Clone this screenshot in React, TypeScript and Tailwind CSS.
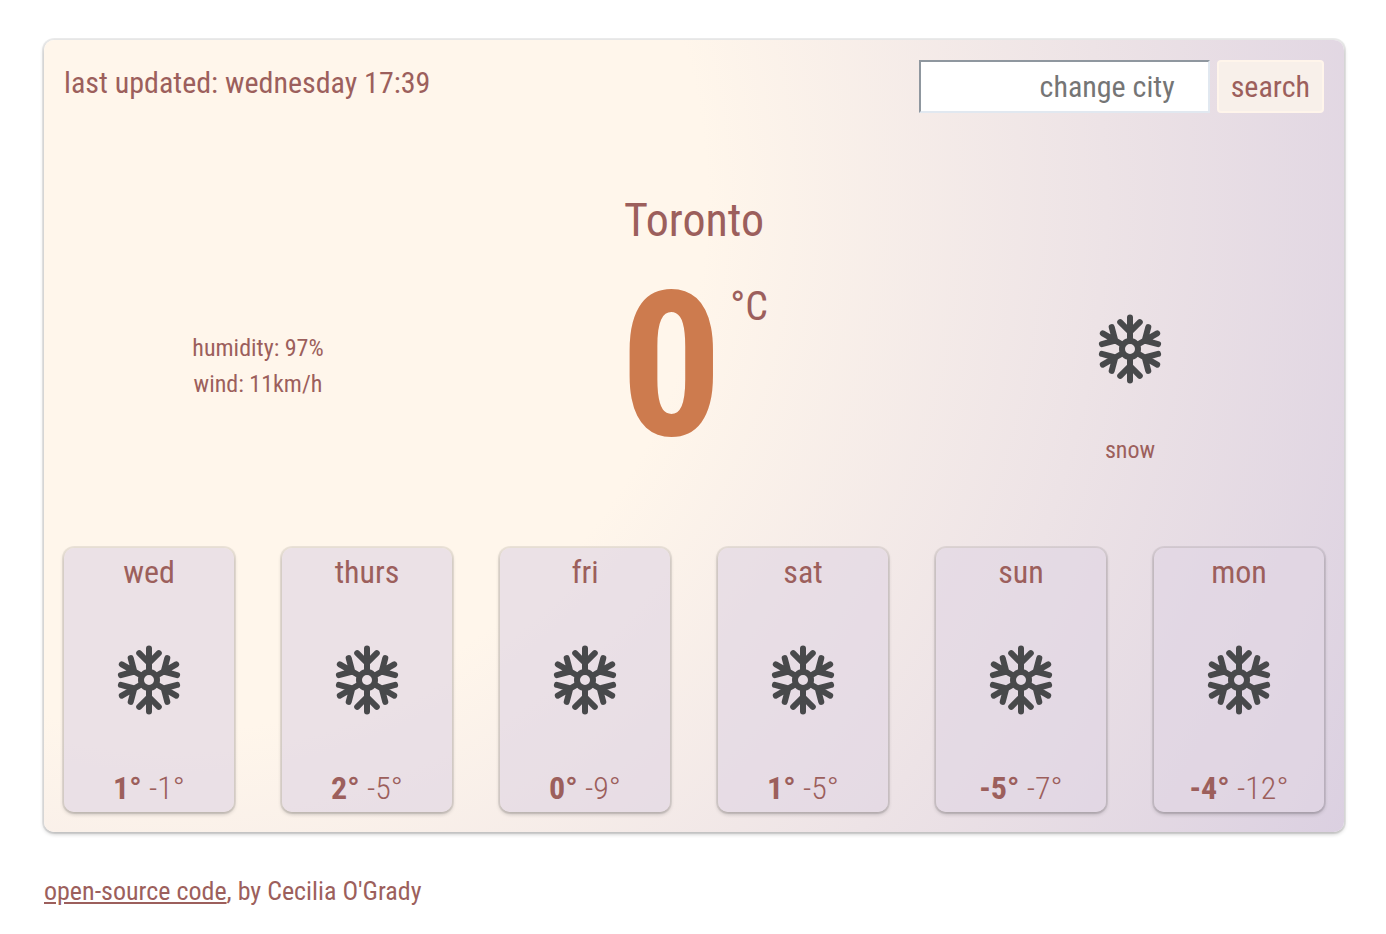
import React from "react";

type Day = { name: string; high: string; low: string };

const days: Day[] = [
  { name: "wed", high: "1°", low: "-1°" },
  { name: "thurs", high: "2°", low: "-5°" },
  { name: "fri", high: "0°", low: "-9°" },
  { name: "sat", high: "1°", low: "-5°" },
  { name: "sun", high: "-5°", low: "-7°" },
  { name: "mon", high: "-4°", low: "-12°" },
];

const arms = [0, 60, 120, 180, 240, 300];

function Snowflake() {
  return (
    <svg viewBox="-50 -50 100 100" className="size-[100px]" role="img" aria-label="snow" fill="none" stroke="#48494b" strokeWidth="6" strokeLinecap="round" strokeLinejoin="round">
      <circle r="8" />
      {arms.map((angle) => (
        <path key={angle} d="M0 -9V-31.4M0 -17L-9.8 -26.8M0 -17L9.8 -26.8" transform={`rotate(${angle})`} />
      ))}
      {arms.map((angle) => (
        <path key={angle} d="M0 -11L-5 -21.5H5Z" fill="#48494b" stroke="none" transform={`rotate(${angle})`} />
      ))}
    </svg>
  );
}

export default function App() {
  return (
    <div className="pt-10 pr-[42px] pb-5 pl-[44px] font-['Roboto_Condensed','Roboto',sans-serif] text-[#9c5f5c]">
      <main className="rounded-[10px] bg-[radial-gradient(circle_at_10%_20%,#fff6eb_0%,#fff6eb_40%,#dbd0e1_100%)] p-5 shadow-[0_0_0_2px_rgba(0,0,0,0.07),0_2px_4px_rgba(0,0,0,0.24)]">
        <header className="flex items-start justify-between">
          <p className="text-[30px] leading-[46px]">last updated: wednesday 17:39</p>
          <form className="flex gap-[7px]" onSubmit={(e) => e.preventDefault()}>
            <input type="text" aria-label="change city" placeholder="change city" className="h-[53px] w-[291px] border-2 border-t-[#8f979f] border-r-[#e1e8f0] border-b-[#e1e8f0] border-l-[#8f979f] bg-white pr-[33px] text-right text-[30px] placeholder:text-[#757575]" />
            <button type="submit" className="h-[53px] rounded border-2 border-[#fff5eb] bg-[#f8f0ea] px-3 text-[30px] leading-none">search</button>
          </form>
        </header>
        <h1 className="mt-[79px] mb-0.5 text-center text-[46px] leading-[56px]">Toronto</h1>
        <section className="-mx-6 grid h-[298px] grid-cols-3">
          <div className="pt-20 text-center text-[24px] leading-9">
            <p>humidity: 97%</p>
            <p>wind: 11km/h</p>
          </div>
          <div className="flex items-start justify-center gap-2 pt-[10px]">
            <strong className="text-[202px] leading-[212px] font-bold text-[#cd7b4e]">0</strong>
            <span className="pt-[23px] text-[40px] leading-[48px]">°C</span>
          </div>
          <div className="flex flex-col items-center pt-[49px] text-[24px] leading-9">
            <Snowflake />
            <p className="pt-[33px]">snow</p>
          </div>
        </section>
        <ul className="grid grid-cols-6 gap-12">
          {days.map((day) => (
            <li key={day.name} className="flex h-[264px] flex-col items-center justify-between rounded-[10px] bg-[#e0d6e3]/65 text-[32px] shadow-[0_0_0_2px_rgba(0,0,0,0.07),0_2px_4px_rgba(0,0,0,0.24)]">
              <h2 className="leading-[48px]">{day.name}</h2>
              <Snowflake />
              <p className="leading-[48px]"><b className="font-bold">{day.high}</b> <span className="font-light">{day.low}</span></p>
            </li>
          ))}
        </ul>
      </main>
      <footer className="pt-[39px] text-[26px] leading-[40px]">
        <a href="#source" className="underline">open-source code</a>, by Cecilia O'Grady
      </footer>
    </div>
  );
}
